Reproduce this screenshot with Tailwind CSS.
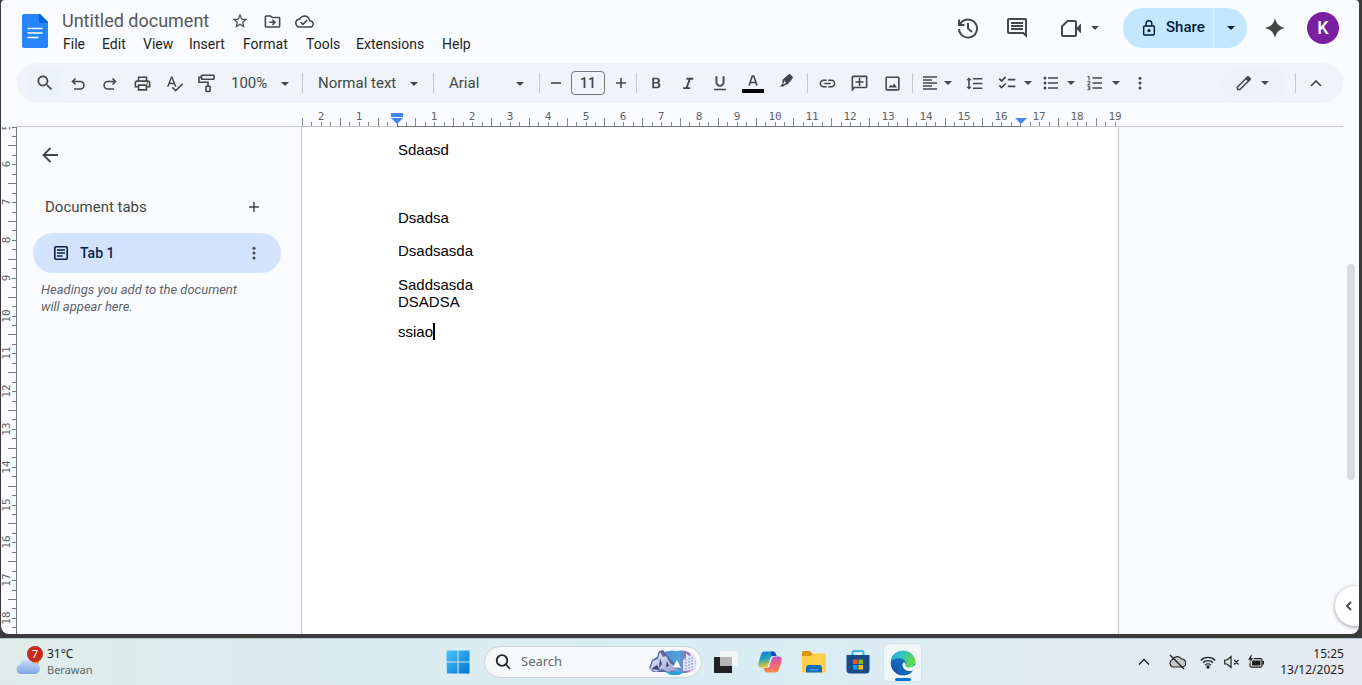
<!DOCTYPE html>
<html lang="en">
<head>
<meta charset="utf-8">
<title>Untitled document</title>
<script src="https://cdn.jsdelivr.net/npm/@tailwindcss/browser@4"></script>
</head>
<body class="flex h-screen flex-col overflow-hidden bg-[#3b3b3b] font-['Roboto','Noto_Sans',sans-serif] text-sm text-[#444746]">
<svg class="hidden">
  <symbol id="caret" viewBox="0 0 10 10"><path d="M1 3h8L5 7z" fill="currentColor"/></symbol>
  <symbol id="dots" viewBox="0 0 24 24"><g fill="currentColor"><circle cx="12" cy="5.500" r="2"/><circle cx="12" cy="12" r="2"/><circle cx="12" cy="18.500" r="2"/></g></symbol>
</svg>

<div class="relative mr-[3px] mb-1 ml-px flex min-h-0 flex-1 flex-col overflow-hidden rounded-t rounded-b-lg bg-[#fafbfe]">
  <header class="flex h-[63px] shrink-0 items-start">
    <a href="#" aria-label="Docs home" class="mt-3.5 ml-[21px] shrink-0">
      <svg class="h-[34px] w-[26px]" viewBox="0 0 26 34"><path fill="#2684fc" d="M2 0h16l8 8v24a2 2 0 0 1-2 2H2a2 2 0 0 1-2-2V2a2 2 0 0 1 2-2z"/><path fill="#0066da" d="M17 0h1l8 8v1h-9z"/><path stroke="#fff" stroke-width="1.600" d="M5.500 14.500h15M5.500 19h15M5.500 23.500h11"/></svg>
    </a>
    <div class="ml-3.5">
      <div class="mt-2 flex h-[26px] items-center">
        <input aria-label="Document name" value="Untitled document" class="w-[168px] bg-transparent text-lg text-[#55585a] outline-none">
        <button aria-label="Star" class="grid w-5 place-items-center"><svg class="size-[18px]" viewBox="0 0 24 24" fill="currentColor"><path d="M22 9.240l-7.190-.62L12 2 9.190 8.630 2 9.240l5.460 4.730L5.820 21 12 17.270 18.180 21l-1.630-7.030L22 9.240zM12 15.400l-3.760 2.270 1-4.280-3.320-2.880 4.380-.38L12 6.100l1.710 4.040 4.380.38-3.320 2.880 1 4.280L12 15.400z"/></svg></button>
        <button aria-label="Move" class="ml-3 grid w-5 place-items-center"><svg class="size-[19px]" viewBox="0 0 24 24" fill="currentColor"><path d="M20 6h-8l-2-2H4c-1.100 0-2 .9-2 2v12c0 1.100.9 2 2 2h16c1.100 0 2-.9 2-2V8c0-1.100-.9-2-2-2zm0 12H4V6h5.170l2 2H20v10zm-7.500-1l4-4-4-4-1.300 1.300 1.700 1.700H8v2h4.900l-1.700 1.700z"/></svg></button>
        <button aria-label="Saved to Drive" class="ml-3 grid w-5 place-items-center"><svg class="size-[19px]" viewBox="0 0 24 24" fill="currentColor"><path d="M19.350 10.040C18.670 6.590 15.640 4 12 4 9.110 4 6.600 5.640 5.350 8.040 2.340 8.360 0 10.910 0 14c0 3.310 2.690 6 6 6h13c2.760 0 5-2.240 5-5 0-2.640-2.050-4.780-4.650-4.960zM19 18H6c-2.210 0-4-1.790-4-4 0-2.050 1.530-3.760 3.560-3.970l1.070-.11.5-.95C8.080 7.140 9.940 6 12 6c2.620 0 4.880 1.860 5.390 4.430l.3 1.500 1.530.11c1.560.1 2.780 1.410 2.780 2.960 0 1.650-1.350 3-3 3zm-9-3.820l-2.090-2.090L6.500 13.500 10 17l6.010-6.010-1.410-1.410z"/></svg></button>
      </div>
      <nav class="ml-px flex h-5 items-center text-[#1f1f1f]">
        <button class="w-[39px] text-left">File</button><button class="w-[41px] text-left">Edit</button><button class="w-[46px] text-left">View</button><button class="w-[54px] text-left">Insert</button><button class="w-[63px] text-left">Format</button><button class="w-[50px] text-left">Tools</button><button class="w-[86px] text-left">Extensions</button><button class="text-left">Help</button>
      </nav>
    </div>
    <div class="mt-2 mr-5 ml-auto flex h-10 items-center">
      <button aria-label="Version history" class="grid w-12 place-items-center"><svg class="size-6" viewBox="0 0 24 24" fill="none" stroke="currentColor" stroke-width="2"><path d="M3.500 9.500A9 9 0 1 1 3 13M3 3.500V9h5.500M12 7v5.400l4 3.600"/></svg></button>
      <button aria-label="Comments" class="grid w-[50px] place-items-center"><svg class="size-6" viewBox="0 0 24 24" fill="currentColor"><path d="M21.990 4c0-1.100-.89-2-1.990-2H4c-1.100 0-2 .9-2 2v12c0 1.100.9 2 2 2h14l4 4-.01-18zM20 4v13.170L18.830 16H4V4h16zM6 12h12v2H6zm0-3h12v2H6zm0-3h12v2H6z"/></svg></button>
      <button aria-label="Join a call" class="ml-3 flex w-[69px] items-center gap-1 pl-1.5"><svg class="h-6 w-[22px]" viewBox="0 0 22 24"><path fill="none" stroke="currentColor" stroke-width="2" stroke-linejoin="round" d="M7.500 5H15a1 1 0 0 1 1 1v13a1 1 0 0 1-1 1H3a1 1 0 0 1-1-1v-8.500z"/><path fill="currentColor" d="M16 12.500l5-5v10z"/></svg><svg class="ml-1 size-2.5"><use href="#caret"/></svg></button>
      <div class="flex h-10 overflow-hidden rounded-full bg-[#c2e7ff] font-medium text-[#001d35]">
        <button class="flex w-[90px] items-center gap-[9px] pl-[18px] text-[15px]"><svg class="size-4 shrink-0" viewBox="0 0 16 18" fill="none" stroke="currentColor" stroke-width="1.600"><rect x="2" y="6.800" width="12" height="10" rx="1"/><path d="M4.800 6.500V4a3.200 3.200 0 0 1 6.400 0v2.500"/><circle cx="8" cy="11.800" r="1" fill="currentColor"/></svg>Share</button>
        <button aria-label="Share options" class="grid w-[34px] place-items-center border-l border-white"><svg class="size-2.5"><use href="#caret"/></svg></button>
      </div>
      <button aria-label="Ask Gemini" class="ml-4 grid w-6 place-items-center"><svg class="size-[22px]" viewBox="0 0 24 24" fill="currentColor"><path d="M12 1c1.500 6.500 4.500 9.500 11 11-6.500 1.500-9.500 4.500-11 11-1.500-6.500-4.500-9.500-11-11 6.500-1.500 9.500-4.500 11-11z"/></svg></button>
      <button aria-label="Account" class="ml-5 size-8 rounded-full bg-[#7b1fa2] text-lg font-medium text-white">K</button>
    </div>
  </header>

  <div role="toolbar" class="mr-4 ml-4 flex h-10 shrink-0 items-center rounded-full bg-[#f0f3f9] pl-2.5">
    <button aria-label="Search menus" class="grid h-7 w-[35px] place-items-center bg-[#edf1fa]"><svg class="size-5" viewBox="0 0 24 24" fill="currentColor"><path d="M15.500 14h-.79l-.28-.27C15.410 12.590 16 11.110 16 9.500 16 5.910 13.090 3 9.500 3S3 5.910 3 9.500 5.910 16 9.500 16c1.610 0 3.090-.59 4.230-1.570l.27.28v.79l5 4.990L20.490 19l-4.990-5zm-6 0C7.010 14 5 11.990 5 9.500S7.010 5 9.500 5 14 7.010 14 9.500 11.990 14 9.500 14z"/></svg></button>
    <button aria-label="Undo" class="grid w-8 place-items-center"><svg class="size-[18px]" viewBox="0 0 18 18" fill="none" stroke="currentColor" stroke-width="1.600"><path d="M6.500 4.500L3.500 7.500l3 3M3.800 7.500h7.400a3.700 3.700 0 0 1 0 7.500H5"/></svg></button>
    <button aria-label="Redo" class="grid w-8 place-items-center"><svg class="size-[18px]" viewBox="0 0 18 18" fill="none" stroke="currentColor" stroke-width="1.600"><path d="M11.500 4.500l3 3-3 3M14.200 7.500H6.800a3.700 3.700 0 0 0 0 7.500H13"/></svg></button>
    <button aria-label="Print" class="grid w-8 place-items-center"><svg class="size-[19px]" viewBox="0 0 24 24" fill="currentColor"><path d="M19 8h-1V3H6v5H5c-1.660 0-3 1.340-3 3v6h4v4h12v-4h4v-6c0-1.660-1.340-3-3-3zM8 5h8v3H8V5zm8 12v2H8v-4h8v2zm2-2v-2H6v2H4v-4c0-.55.45-1 1-1h14c.55 0 1 .45 1 1v4h-2z"/><circle cx="18" cy="11.500" r="1"/></svg></button>
    <button aria-label="Spelling" class="grid w-8 place-items-center"><svg class="size-[19px]" viewBox="0 0 24 24" fill="currentColor"><path d="M12.450 16h2.090L9.430 3H7.570L2.460 16h2.090l1.120-3h5.640l1.140 3zm-6.020-5L8.500 5.480 10.570 11H6.430zm15.160.59l-8.090 8.090L9.830 16l-1.410 1.410 5.090 5.090L23 13l-1.410-1.410z"/></svg></button>
    <button aria-label="Paint format" class="grid w-8 place-items-center"><svg class="size-[19px]" viewBox="0 0 18 19" fill="none" stroke="currentColor" stroke-width="1.600"><rect x="4" y="1.300" width="12.500" height="4" rx=".5"/><path d="M4 3.300H1.500v5h9v4"/><rect x="8.500" y="12.300" width="4" height="5.200" rx=".5"/></svg></button>
    <div class="relative w-20 pt-0.5">
      <select aria-label="Zoom" class="w-full appearance-none bg-transparent pl-[9px] text-[15px] outline-none"><option>100%</option></select>
      <svg class="pointer-events-none absolute top-2 right-3 size-2.5"><use href="#caret"/></svg>
    </div>
    <div class="h-5 w-px bg-[#c7c7c7]"></div>
    <div class="relative w-[130px] pt-0.5">
      <select aria-label="Styles" class="w-full appearance-none bg-transparent pl-[15px] text-[15px] outline-none"><option>Normal text</option></select>
      <svg class="pointer-events-none absolute top-2 right-3.5 size-2.5"><use href="#caret"/></svg>
    </div>
    <div class="h-5 w-px bg-[#c7c7c7]"></div>
    <div class="relative w-[105px] pt-0.5">
      <select aria-label="Font" class="w-full appearance-none bg-transparent pl-[15px] text-[15px] outline-none"><option>Arial</option></select>
      <svg class="pointer-events-none absolute top-2 right-3.5 size-2.5"><use href="#caret"/></svg>
    </div>
    <div class="h-5 w-px bg-[#c7c7c7]"></div>
    <button aria-label="Decrease font size" class="grid w-[31px] place-items-center"><svg class="size-3" viewBox="0 0 12 12" stroke="currentColor" stroke-width="1.600"><path d="M1 6h10"/></svg></button>
    <input aria-label="Font size" value="11" class="h-6 w-[34px] rounded border border-[#747775] bg-transparent text-center font-medium outline-none">
    <button aria-label="Increase font size" class="grid w-[31px] place-items-center"><svg class="size-3" viewBox="0 0 12 12" stroke="currentColor" stroke-width="1.600"><path d="M1 6h10M6 1v10"/></svg></button>
    <div class="mr-[3px] h-5 w-px bg-[#c7c7c7]"></div>
    <button aria-label="Bold" class="grid w-8 place-items-center"><svg class="size-[18px]" viewBox="0 0 24 24" fill="currentColor"><path d="M15.600 11.790c.97-.67 1.650-1.770 1.650-2.790 0-2.260-1.750-4-4-4H7v14h7.040c2.090 0 3.710-1.700 3.710-3.790 0-1.520-.86-2.820-2.150-3.420zM9.500 7h3.500c.83 0 1.500.67 1.500 1.800s-.67 1.900-1.500 1.900H9.500V7zm4 10H9.500v-4.200h4c.83 0 1.500.9 1.500 2.100s-.67 2.100-1.500 2.100z"/></svg></button>
    <button aria-label="Italic" class="grid w-8 place-items-center"><svg class="size-[18px]" viewBox="0 0 24 24" fill="currentColor"><path d="M10 5v2.500h2.700L9 17.500H5.500V20H15v-2.500h-3.300l3.700-10H19V5z"/></svg></button>
    <button aria-label="Underline" class="grid w-8 place-items-center"><svg class="size-[18px]" viewBox="0 0 24 24" fill="currentColor"><path d="M12 17c3.310 0 6-2.690 6-6V3h-2.500v8c0 1.930-1.570 3.500-3.500 3.500S8.500 12.930 8.500 11V3H6v8c0 3.310 2.690 6 6 6zm-8 2.500v2h16v-2H4z"/></svg></button>
    <button aria-label="Text color" class="grid w-[34px] place-items-center"><svg class="h-5 w-[22px]" viewBox="0 0 22 20"><path d="M7 12.500L10.300 3h1.400L15 12.500M8.200 9.500h5.600" fill="none" stroke="currentColor" stroke-width="1.600"/><path d="M0 16h22v4H0z"/></svg></button>
    <button aria-label="Highlight color" class="grid w-[34px] place-items-center"><svg class="h-5 w-4" viewBox="0 0 16 20" fill="currentColor"><path fill-rule="evenodd" d="M3.500 6.800l6-5.300a1.500 1.500 0 0 1 2 .1l2 2a1.500 1.500 0 0 1 .1 2L8.500 11.500l-2.200.2L4.500 13.500H1l2.500-3zM5 7.800l2.300 2.300-1.600.4-1 1-.7-.7 1-1z"/></svg></button>
    <div class="mx-[3px] h-5 w-px bg-[#c7c7c7]"></div>
    <button aria-label="Insert link" class="grid w-8 place-items-center"><svg class="size-[19px]" viewBox="0 0 24 24" fill="currentColor"><path d="M3.900 12c0-1.710 1.390-3.100 3.100-3.100h4V7H7c-2.760 0-5 2.240-5 5s2.240 5 5 5h4v-1.900H7c-1.710 0-3.100-1.390-3.100-3.100zM8 13h8v-2H8v2zm9-6h-4v1.900h4c1.710 0 3.100 1.390 3.100 3.100s-1.390 3.100-3.100 3.100h-4V17h4c2.760 0 5-2.240 5-5s-2.240-5-5-5z"/></svg></button>
    <button aria-label="Add comment" class="grid w-8 place-items-center"><svg class="size-[19px]" viewBox="0 0 24 24" fill="currentColor"><path d="M22 4c0-1.100-.9-2-2-2H4c-1.100 0-2 .9-2 2v18l4-4h14c1.100 0 2-.9 2-2V4zm-2 12H5.200L4 17.200V4h16v12zM11 5h2v4h4v2h-4v4h-2v-4H7V9h4z"/></svg></button>
    <button aria-label="Insert image" class="grid w-[34px] place-items-center"><svg class="size-[19px]" viewBox="0 0 24 24" fill="currentColor"><path d="M19 5v14H5V5h14m0-2H5c-1.100 0-2 .9-2 2v14c0 1.100.9 2 2 2h14c1.100 0 2-.9 2-2V5c0-1.100-.9-2-2-2zm-4.860 9l-2.600 3.500L9.700 13.500 7 17h10.500z"/></svg></button>
    <div class="ml-[3px] h-5 w-px bg-[#c7c7c7]"></div>
    <button aria-label="Align" class="flex w-[42px] items-center gap-[3px] pl-[7px]"><svg class="size-5 shrink-0" viewBox="0 0 20 20" stroke="currentColor" stroke-width="1.500"><path d="M3 4h14M3 7h9M3 10h14M3 13h9M3 16h14"/></svg><svg class="size-2.5 shrink-0"><use href="#caret"/></svg></button>
    <button aria-label="Line spacing" class="grid w-[38px] place-items-center"><svg class="size-[19px]" viewBox="0 0 24 24" fill="currentColor"><path d="M6 8h2.500L5 4.500 1.500 8H4v8H1.500L5 19.500 8.500 16H6V8zm4-3v2h12V5H10zm0 14h12v-2H10v2zm0-6h12v-2H10v2z"/></svg></button>
    <button aria-label="Checklist" class="flex w-11 items-center gap-1.5 pl-1"><svg class="size-5 shrink-0" viewBox="0 0 24 24" fill="currentColor"><path d="M22 7h-9v2h9V7zm0 8h-9v2h9v-2zM5.540 11L2 7.460l1.410-1.410 2.120 2.120 4.240-4.240 1.410 1.410L5.540 11zm0 8L2 15.460l1.410-1.410 2.120 2.120 4.240-4.240 1.410 1.410L5.540 19z"/></svg><svg class="size-2.5 shrink-0"><use href="#caret"/></svg></button>
    <button aria-label="Bulleted list" class="flex w-11 items-center gap-[5px] pl-1"><svg class="size-5 shrink-0" viewBox="0 0 20 20"><path d="M7 5h10M7 10h10M7 15h10" stroke="currentColor" stroke-width="1.600"/><g fill="currentColor"><circle cx="4" cy="5" r="1.500"/><circle cx="4" cy="10" r="1.500"/><circle cx="4" cy="15" r="1.500"/></g></svg><svg class="size-2.5 shrink-0"><use href="#caret"/></svg></button>
    <button aria-label="Numbered list" class="flex w-11 items-center gap-1.5 pl-1"><svg class="size-5 shrink-0" viewBox="0 0 20 20"><path d="M7.500 5H17M7.500 10H17M7.500 15H17" stroke="currentColor" stroke-width="1.600"/><path d="M2.500 3.500H4v4M2.500 8.700H5v.8L2.800 11.800H5.200M2.500 13.300h2.300v3.400H2.500M3 15h1.800" fill="none" stroke="currentColor"/></svg><svg class="size-2.5 shrink-0"><use href="#caret"/></svg></button>
    <button aria-label="More" class="grid w-[30px] place-items-center"><svg class="size-[18px]"><use href="#dots"/></svg></button>
    <button aria-label="Editing mode" class="ml-auto flex h-[30px] w-[65px] items-center gap-1.5 rounded-full bg-[#eef1fa] pl-[13px]"><svg class="size-5" viewBox="0 0 20 20" fill="none" stroke="currentColor" stroke-width="1.500" stroke-linejoin="round"><path d="M3.500 16.500V14l9.800-9.800a1 1 0 0 1 1.400 0l1.100 1.100a1 1 0 0 1 0 1.400L6 16.500z"/><path fill="currentColor" d="M12 5.500l2.500 2.500 1.500-1.700-2.300-2.300z"/></svg><svg class="size-2.5"><use href="#caret"/></svg></button>
    <div class="ml-[9px] h-5 w-px bg-[#c7c7c7]"></div>
    <button aria-label="Hide menus" class="mr-2 grid w-[39px] place-items-center"><svg class="size-3" viewBox="0 0 12 12" fill="none" stroke="currentColor" stroke-width="1.600"><path d="M1 9L6 4l5 5"/></svg></button>
  </div>

  <div class="mr-4 ml-4 h-6 shrink-0 border-b border-[#c7c7c7]">
    <svg id="hruler" class="block h-6 w-full overflow-visible font-['DejaVu_Sans_Mono',monospace] text-[11px]"></svg>
  </div>

  <main class="flex min-h-0 flex-1">
    <svg id="vruler" class="h-full w-4 shrink-0 font-['DejaVu_Sans_Mono',monospace] text-[11px]"></svg>
    <aside class="w-[284px] shrink-0 pl-4">
      <button aria-label="Close tabs panel" class="mt-[18px] ml-[7px] grid size-5 place-items-center"><svg class="size-5" viewBox="0 0 20 20" fill="none" stroke="currentColor" stroke-width="1.800"><path d="M18 10H3.500M10.500 3L3.500 10l7 7"/></svg></button>
      <div class="mt-8 flex h-5 items-center pl-3">
        <h2 class="pt-0.5 text-[15px]">Document tabs</h2>
        <button aria-label="Add tab" class="mr-[41px] ml-auto"><svg class="size-3" viewBox="0 0 12 12" stroke="currentColor" stroke-width="1.500"><path d="M1 6h10M6 1v10"/></svg></button>
      </div>
      <div class="mt-4 mr-5 flex h-10 items-center rounded-full bg-[#d3e3fd] text-[#041e49]">
        <button class="flex flex-1 items-center gap-[11px] pl-5 font-medium"><svg class="size-4" viewBox="0 0 16 16" fill="none" stroke="currentColor" stroke-width="1.600"><rect x="1.800" y="1.800" width="12.400" height="12.400" rx="1"/><path stroke-width="1.300" d="M4 5h8M4 8h8M4 11h5.500"/></svg>Tab 1</button>
        <button aria-label="Tab options" class="mr-[18px]"><svg class="size-[18px] text-[#444746]"><use href="#dots"/></svg></button>
      </div>
      <p class="mt-2 w-[220px] pl-2 text-[13px] leading-[17px] text-[#5f6368] italic">Headings you add to the document will appear here.</p>
    </aside>
    <article class="w-[818px] shrink-0 border-x border-[#c7c7c7] bg-white pt-3.5 pl-24 font-['Liberation_Sans',Arial,sans-serif] text-[15px] leading-[17px] text-black">
      <p>Sdaasd</p>
      <p class="mt-[51px]">Dsadsa</p>
      <p class="mt-4">Dsadsasda</p>
      <p class="mt-[17px]">Saddsasda</p>
      <p>DSADSA</p>
      <p class="mt-[13px] flex">ssiao<span class="h-[17px] w-0.5 bg-black"></span></p>
    </article>
  </main>
  <div class="absolute top-[264px] right-1 h-[216px] w-2 rounded-full bg-[#dadce0]"></div>
  <button aria-label="Show side panel" class="absolute -right-4 bottom-2 flex size-10 items-center rounded-full bg-white pl-2 shadow-[0_1px_4px_rgba(0,0,0,0.4)]"><svg class="size-3" viewBox="0 0 12 12" fill="none" stroke="currentColor" stroke-width="1.800"><path d="M8 2L4 6l4 4"/></svg></button>
</div>

<footer class="flex h-[47px] shrink-0 items-center border-t border-[#b9c6ca] bg-linear-to-r from-[#dfecea] via-[#d9edf4] to-[#e6e9f2] font-['Noto_Sans','Open_Sans',sans-serif] text-xs text-[#1b1b1b]">
  <div class="flex flex-1">
    <button class="flex items-start gap-1 pl-[15px] text-left leading-4">
      <svg class="h-[30px] w-7" viewBox="0 0 28 30"><defs><linearGradient id="cl" x2="0" y2="1"><stop stop-color="#cfe0fb"/><stop offset="1" stop-color="#7ea4e6"/></linearGradient></defs><circle cx="19" cy="15" r="5" fill="#f28c1d"/><path fill="url(#cl)" d="M5 28a5 5 0 0 1 0-9.500 7 7 0 0 1 13-1.500 5.600 5.600 0 1 1 1 11z"/><circle cx="20" cy="8" r="8" fill="#c42b1c"/><text x="20" y="12" text-anchor="middle" fill="#fff" class="text-[11px]">7</text></svg>
      <span>31°C<br><span class="text-[11px] text-[#5a6668]">Berawan</span></span>
    </button>
  </div>
  <div class="ml-6 flex items-center">
    <button aria-label="Start" class="mr-3.5"><svg class="size-6" viewBox="0 0 24 24"><defs><linearGradient id="wn" x2="1" y2="1"><stop stop-color="#4cc8fb"/><stop offset="1" stop-color="#0070d0"/></linearGradient></defs><path fill="url(#wn)" d="M1 .5h10.500v11H.5V1zM12.500.5h11v11h-11zM.5 12.500h11v11H1zM12.500 12.500h11v11h-11z"/></svg></button>
    <label class="flex h-8 w-[218px] items-center rounded-full border border-[#c9d3da] bg-[#f5f9fc] pl-2.5">
      <svg class="size-4 shrink-0" viewBox="0 0 16 16" fill="none" stroke="#222" stroke-width="1.800"><circle cx="7" cy="6.500" r="5.300"/><path d="M11 10.500l4 4.500"/></svg>
      <input aria-label="Search" placeholder="Search" class="ml-2.5 w-0 flex-1 bg-transparent text-[13px] outline-none placeholder:text-[#666]">
      <svg class="mr-[3px] h-[26px] w-[50px]" viewBox="0 0 50 26"><defs><linearGradient id="sky" x2="1"><stop stop-color="#6a7ad0"/><stop offset=".5" stop-color="#4aa6dc"/><stop offset=".75" stop-color="#9b6ba8"/><stop offset="1" stop-color="#c7b6e6"/></linearGradient><linearGradient id="ice" x2="1" y2="1"><stop stop-color="#f4f5fd"/><stop offset="1" stop-color="#8f9ad0"/></linearGradient></defs><path fill="url(#sky)" d="M12 5Q20 0 28 2q10-2 15 3 8 5 4 15-6 5-16 4-14 2-16-4z"/><path fill="#5a68a0" d="M1 19L4 11l5-3 2-6 4-1 4 5 7 8 6 5-8 4H5z"/><path fill="url(#ice)" d="M2 20l3-8 5-2 2-7 3 5 3-1 4 7 6 4 2 3-10 2-6-3-6 3z"/><path fill="#3a4678" d="M12 9l2 6-3 4zM19 12l2 5-3 1zM3 20l6-4 3 5z"/><path fill="#fff" d="M25 18l4-7 4 8z"/><path fill="#dfe5fa" d="M35 22V11l3-2V4l3 3 2-1V2l4 5 1 14z"/><path stroke="#7d8bd2" stroke-width="1.200" stroke-dasharray="1.500 1.500" d="M38 10v11M41 9v12M44 8v13"/><path fill="#27a4cf" d="M18 23h18l-5 3h-9z"/></svg>
    </label>
    <button aria-label="Task view" class="ml-3 w-6"><svg class="size-6" viewBox="0 0 24 24"><path fill="#222" d="M0 7h18v16H0z"/><path fill="#f4f4f4" d="M6 1h18v15H6z"/><path fill="#b6b6b6" d="M6 7h12v9H6z"/></svg></button>
    <button aria-label="Copilot" class="ml-5 w-6"><svg class="size-6" viewBox="0 0 24 24"><defs><linearGradient id="c1" x2=".3" y2="1"><stop stop-color="#1673e6"/><stop offset=".5" stop-color="#21a6b8"/><stop offset="1" stop-color="#f2c72e"/></linearGradient><linearGradient id="c2" x2=".2" y2="1"><stop stop-color="#9a5ee8"/><stop offset=".5" stop-color="#ec5b8c"/><stop offset="1" stop-color="#fb8a4a"/></linearGradient></defs><path fill="url(#c1)" d="M6.500 1.500H15q2 0 2.700 2.200L18.500 6H15q-2 0-2.600 2l-2 7q-.8 2.500-3 2.500H3Q-.5 17.500.5 13L3 4.500q.8-3 3.500-3z"/><path fill="url(#c2)" d="M17.500 22.500H9q-2 0-2.700-2.200L5.500 18H9q2 0 2.600-2l2-7q.8-2.500 3-2.500H21q3.500 0 2.500 4.500L21 19.500q-.8 3-3.500 3z"/><path fill="#1c48b5" d="M13 1.500h2q2 0 2.700 2.200L18.500 6H15q-1 0-1.500.5z"/></svg></button>
    <button aria-label="File Explorer" class="ml-5 w-6"><svg class="size-6" viewBox="0 0 24 24"><path fill="#d9950c" d="M0 2.500Q0 1 1.500 1H8l2.500 3H22v6H0z"/><path fill="#ffcf48" d="M0 6h9l2-2.500h12q1 0 1 1V21q0 1.500-1.500 1.500h-21Q0 22.500 0 21z"/><path fill="#0f6cbd" d="M4 22.500V18q0-3 3-3h10q3 0 3 3v4.500z"/><path fill="#38a0e8" d="M8 19h8v1.500H8z"/></svg></button>
    <button aria-label="Microsoft Store" class="ml-5 w-6"><svg class="size-6" viewBox="0 0 24 24"><path fill="none" stroke="#36b3e8" stroke-width="2" d="M6.500 6V2.500Q6.500 1 8 1h8q1.500 0 1.500 1.500V6"/><path fill="#164a8a" d="M.5 5h23v15q0 3.500-3.500 3.500H4Q.5 23.500.5 20z"/><path fill="#f25022" d="M7 9.500h4.500V14H7z"/><path fill="#7fba00" d="M12.500 9.500H17V14h-4.500z"/><path fill="#00a4ef" d="M7 15h4.500v4.500H7z"/><path fill="#ffb900" d="M12.500 15H17v4.500h-4.500z"/></svg></button>
    <button aria-label="Edge" class="ml-[13px] flex h-[39px] w-[39px] flex-col items-center justify-end rounded border border-[#d9e2ea] bg-[#eff6fa]"><svg class="size-[26px]" viewBox="0 0 26 26"><defs><linearGradient id="e1" x2="1" y2=".3"><stop stop-color="#2aa4dc"/><stop offset=".5" stop-color="#35c4c0"/><stop offset="1" stop-color="#62d84a"/></linearGradient><linearGradient id="e2" x2="0" y2="1"><stop stop-color="#1a7fd6"/><stop offset="1" stop-color="#104a9c"/></linearGradient></defs><circle cx="13" cy="13" r="12.300" fill="url(#e2)"/><path fill="url(#e1)" d="M.8 11.500C2 5 7 .7 13 .7c7 0 12.300 5 12.300 10.500 0 4-3 6.300-6.300 6.300-2.500 0-4-1-3.500-2.200.8-1.500 1-5.300-4.500-6.800C6.500 7.500 2.500 9 .8 11.500z"/><path fill="#eff6fa" d="M15.500 15.300c-.5 1.200 1 2.200 3.500 2.200 2 0 4-.8 5.200-2l1.800 1-2 4.500c-3 1-10 .5-11.500-5-.3-1.800.3-3.200 1.500-3.800 1.500.8 2 2 1.500 3.100z"/><path fill="#1668bd" d="M11 16c.5 5 7 7.500 12.500 4C20 25.500 13 26.500 9 23.500c-3-3-2-8 3-11.300-1 1-1.200 2.500-1 3.800z"/></svg><span class="mt-0.5 h-[3px] w-4 rounded-full bg-[#0078d4]"></span></button>
  </div>
  <div class="flex flex-1 items-center justify-end pr-[18px]">
    <button aria-label="Hidden icons" class="mr-[18px]"><svg class="size-3" viewBox="0 0 12 12" fill="none" stroke="currentColor" stroke-width="1.400"><path d="M1 8.500l5-5 5 5"/></svg></button>
    <button aria-label="OneDrive" class="mr-3.5"><svg class="size-[18px]" viewBox="0 0 18 18"><path fill="#c9c9c9" stroke="#222" stroke-width="1.200" d="M5 14a4 4 0 0 1-.5-7.500A5.200 5.200 0 0 1 13.500 6 4 4 0 0 1 14 14z"/><path stroke="#222" stroke-width="1.400" d="M2 2l14 14"/></svg></button>
    <button aria-label="Network, volume and battery" class="flex items-center gap-2">
      <svg class="size-4" viewBox="0 0 16 16" fill="none" stroke="currentColor" stroke-width="1.300"><path d="M.8 6.500a10 10 0 0 1 14.400 0M3 8.800a7 7 0 0 1 10 0M5.200 11a4 4 0 0 1 5.600 0"/><circle cx="8" cy="13" r="1" fill="currentColor"/></svg>
      <svg class="size-4" viewBox="0 0 16 16" fill="none" stroke="currentColor" stroke-width="1.200"><path d="M.8 6H3l4-3.500v11L3 10H.8zM10 6l4.500 4.500M14.500 6L10 10.500"/></svg>
      <svg class="size-4" viewBox="0 0 16 16"><rect x="2" y="4.600" width="12" height="8.500" rx="1.500" fill="none" stroke="currentColor" stroke-width="1.200"/><path fill="currentColor" d="M4 6.500h8.500v5H4zM14.500 7h1.500v3.500h-1.500z"/><path fill="currentColor" stroke="#e6e9f2" stroke-width=".8" d="M3 .5L-.5 6H2L1 9.500 6 4H3.500L4.500.5z"/></svg>
    </button>
    <time class="ml-4 text-right leading-4">15:25<br>13/12/2025</time>
  </div>
</footer>

<script>
const NS = 'http://www.w3.org/2000/svg', CM = 37.8;
function add(svg, tag, attrs, text) {
  const el = document.createElementNS(NS, tag);
  for (const k in attrs) el.setAttribute(k, attrs[k]);
  if (text) el.textContent = text;
  svg.appendChild(el);
}
// Horizontal ruler: zero sits at the left page margin, one label per centimetre
const h = document.getElementById('hruler'), zero = 380;
for (let q = -10; q <= 76; q++) {
  const x = Math.floor(zero + q * CM / 4), half = Math.abs(q % 4) === 2;
  add(h, 'rect', { x, y: half ? 15 : 19, width: 1, height: half ? 8 : 4, fill: '#85888a' });
  if (q % 4 === 0 && q) add(h, 'text', { x, y: 17, 'text-anchor': 'middle', fill: '#5f6368' }, String(Math.abs(q / 4)));
}
add(h, 'rect', { x: zero, y: 23, width: 624, height: 1, fill: '#747775' });
add(h, 'path', { d: 'M374 10h12v4h-12zM374 15h12l-6 6z', fill: '#4285f4' });
add(h, 'path', { d: 'M998 15h12l-6 6z', fill: '#4285f4' });
// Vertical ruler: scrolled so that the 5 cm mark is at the top edge
const v = document.getElementById('vruler');
for (let q = 0; q <= 53; q++) {
  const y = Math.floor(q * CM / 4), half = q % 4 === 2;
  add(v, 'rect', { x: half ? 7 : 11, y, width: half ? 8 : 4, height: 1, fill: '#747775' });
  if (q % 4 === 0) add(v, 'text', { transform: `translate(9 ${y}) rotate(-90)`, 'text-anchor': 'middle', fill: '#5f6368' }, String(5 + q / 4));
}
add(v, 'rect', { x: 15, y: 0, width: 1, height: '100%', fill: '#747775' });
</script>
</body>
</html>
